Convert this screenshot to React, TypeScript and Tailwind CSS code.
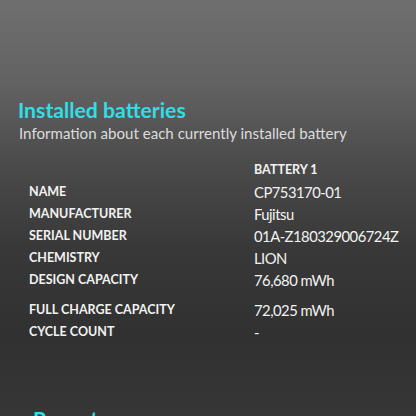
import React from "react";

type Row = { label: string; value: string; gap?: boolean };

const rows: Row[] = [
  { label: "NAME", value: "CP753170-01" },
  { label: "MANUFACTURER", value: "Fujitsu" },
  { label: "SERIAL NUMBER", value: "01A-Z180329006724Z" },
  { label: "CHEMISTRY", value: "LION" },
  { label: "DESIGN CAPACITY", value: "76,680 mWh" },
  { label: "FULL CHARGE CAPACITY", value: "72,025 mWh", gap: true },
  { label: "CYCLE COUNT", value: "-" },
];

export default function App() {
  return (
    <div className="h-[416px] w-full overflow-hidden bg-[linear-gradient(180deg,#6f6f6f_0%,#626262_20%,#4a4a4a_40%,#383838_60%,#313131_80%,#363636_100%)] font-['Lato',sans-serif]">
      <div className="pl-[18px] pt-[97px]">
        <h1 className="text-[21.2px] font-bold leading-[26px] text-[#33dde6]">
          Installed batteries
        </h1>
        <p className="pl-px text-[15.1px] leading-[20px] text-[#dcdcdc]">
          Information about each currently installed battery
        </p>

        <div className="mt-[16px] grid grid-cols-[225px_1fr] items-center pl-[11px] text-[#f2f2f2]">
          <div />
          <div className="text-[12.5px] font-bold leading-[22px]">BATTERY 1</div>
          {rows.map((r) => (
            <React.Fragment key={r.label}>
              <div
                className={`whitespace-nowrap text-[12.5px] font-bold leading-[22px] ${r.gap ? "mt-[8px]" : ""}`}
              >
                {r.label}
              </div>
              <div
                className={`whitespace-nowrap text-[14.8px] leading-[22px] tracking-[-0.5px] ${r.gap ? "mt-[8px]" : ""}`}
              >
                {r.value}
              </div>
            </React.Fragment>
          ))}
        </div>

        <h2 className="mt-[63px] pl-[15px] text-[21.2px] font-bold leading-[26px] text-[#33dde6]">
          Recent usage
        </h2>
      </div>
    </div>
  );
}
